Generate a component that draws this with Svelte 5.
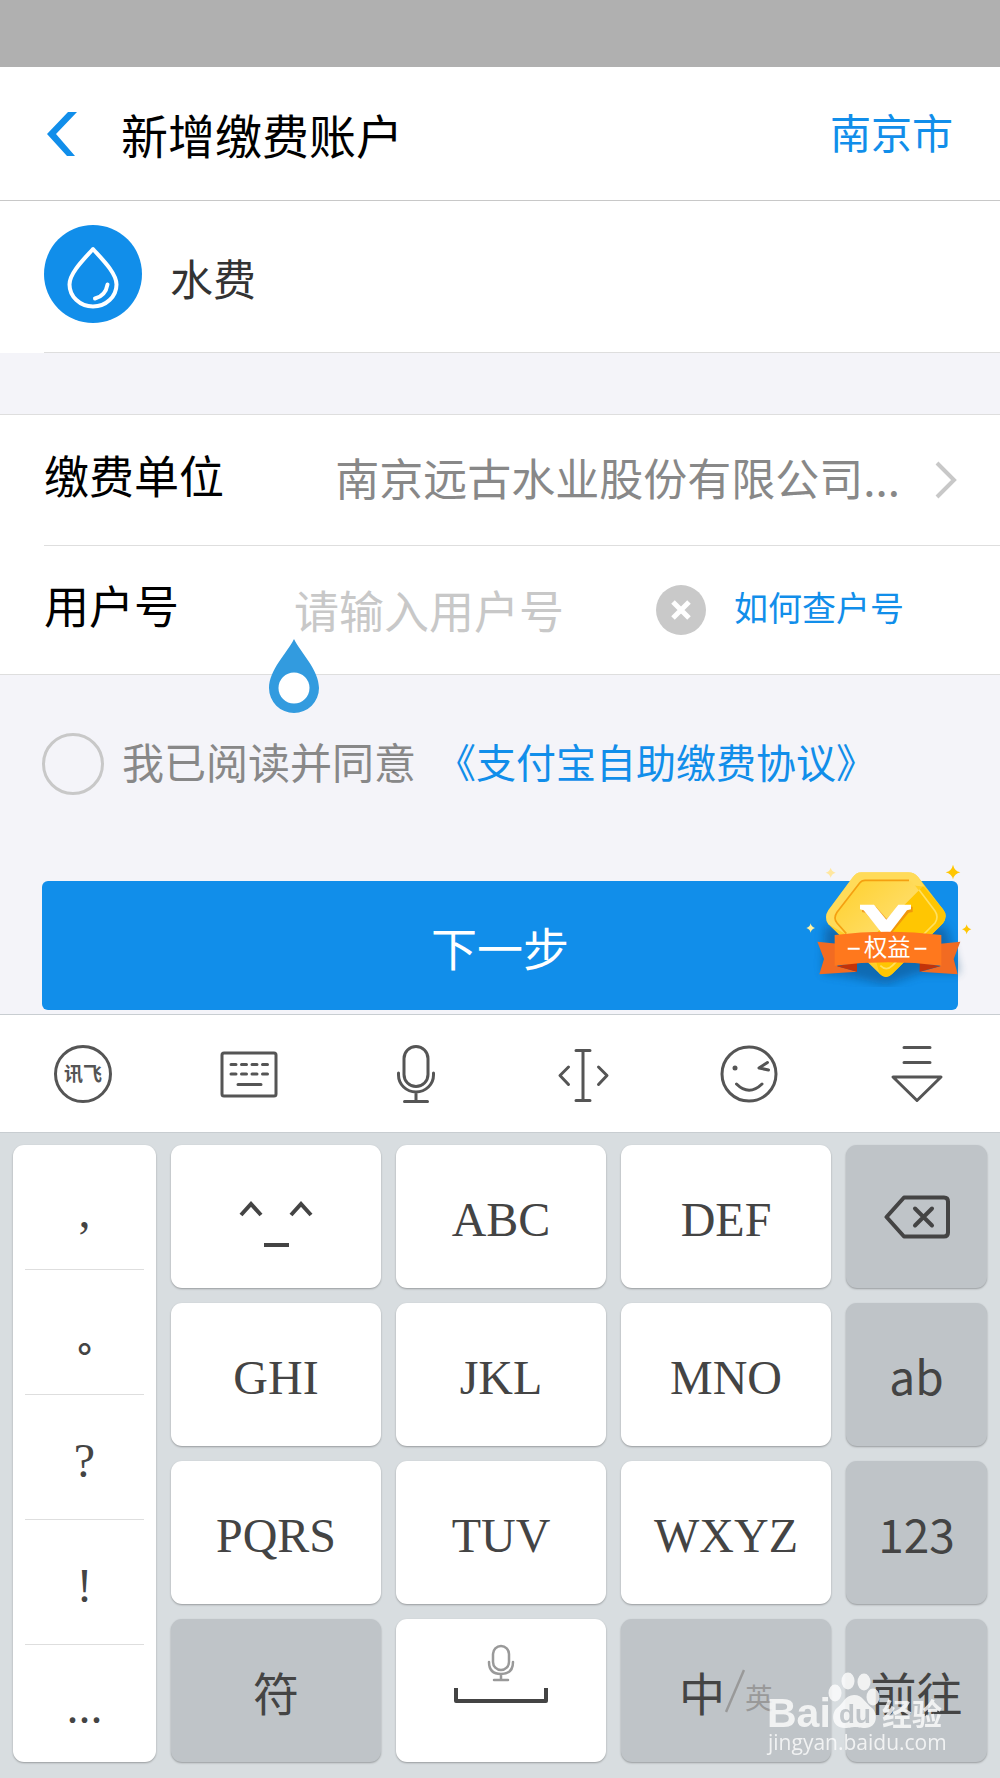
<script lang="ts">
    type Key = { label: string; kind?: string };

    const marks = [",", "。", "?", "!", "..."];

    const keys: Key[] = [
        { label: "^_^", kind: "face" },
        { label: "ABC" },
        { label: "DEF" },
        { label: "删除", kind: "delete" },
        { label: "GHI" },
        { label: "JKL" },
        { label: "MNO" },
        { label: "ab", kind: "side" },
        { label: "PQRS" },
        { label: "TUV" },
        { label: "WXYZ" },
        { label: "123", kind: "side" },
        { label: "符", kind: "symbol" },
        { label: "空格", kind: "space" },
        { label: "中", kind: "lang" },
        { label: "前往", kind: "go" },
    ];

    const grayKinds = ["delete", "side", "symbol", "lang", "go"];

    let account = $state("");
    let agreed = $state(false);
</script>

<div class="screen">
    <div class="statusBar"></div>

    <header>
        <button class="back" aria-label="返回">
            <svg width="32" height="46" viewBox="0 0 32 46">
                <path d="M22 1h9L10 23 29 45h-8L1 23z" fill="#118eea" />
            </svg>
        </button>
        <h1>新增缴费账户</h1>
        <a class="city" href="#city">南京市</a>
    </header>

    <main>
        <section class="service">
            <svg class="drop" width="98" height="98" viewBox="0 0 98 98">
                <circle cx="49" cy="49" r="49" fill="#118eea" />
                <g fill="none" stroke="#fff" stroke-width="4" stroke-linecap="round" stroke-linejoin="round">
                    <path d="M49 24C40 34 25.500 48 25.500 59.500a23.500 22 0 0 0 47 0C72.500 48 58 34 49 24z" />
                    <path d="M63.500 59.500q-2 11.500-12.500 14" />
                </g>
            </svg>
            <span>水费</span>
        </section>

        <section class="form">
            <div class="row">
                <span class="label" id="unitLabel">缴费单位</span>
                <button class="unit" aria-labelledby="unitLabel unitValue">
                    <span id="unitValue">南京远古水业股份有限公司...</span>
                    <svg width="24" height="40" viewBox="0 0 24 40">
                        <path d="M3 3l17 17L3 37" fill="none" stroke="#c8c8c8" stroke-width="4" />
                    </svg>
                </button>
            </div>
            <div class="row account">
                <label class="label" for="account">用户号</label>
                <div class="inputBox">
                    <input id="account" type="text" placeholder="请输入用户号" bind:value={account} />
                    <svg class="handle" width="52" height="76" viewBox="0 0 52 76">
                        <path
                            d="M26 1C33 15 51 32 51 50a25 25 0 0 1-50 0C1 32 19 15 26 1z"
                            fill="#329bdf"
                        />
                        <circle cx="26" cy="50" r="15.500" fill="#fff" />
                    </svg>
                </div>
                <button class="clear" aria-label="清除" onclick={() => (account = "")}>
                    <svg width="50" height="50" viewBox="0 0 50 50">
                        <circle cx="25" cy="25" r="25" fill="#c9c9c9" />
                        <path d="M17 17l16 16M33 17L17 33" stroke="#fff" stroke-width="5" />
                    </svg>
                </button>
                <a class="help" href="#help">如何查户号</a>
            </div>
        </section>

        <div class="agree">
            <input id="agree" type="checkbox" bind:checked={agreed} />
            <label for="agree">我已阅读并同意</label>
            <a href="#terms">《支付宝自助缴费协议》</a>
        </div>

        <div class="action">
            <button class="next">下一步</button>
            <svg class="badge" width="174" height="124" viewBox="70 70 522 372">
                <defs>
                    <linearGradient id="gold" x1="0" y1="0" x2="1" y2="1">
                        <stop offset="0" stop-color="#ffd02a" />
                        <stop offset="0.500" stop-color="#ffdc62" />
                    </linearGradient>
                    <filter id="shade" x="-30%" y="-30%" width="160%" height="180%">
                        <feGaussianBlur stdDeviation="14" />
                    </filter>
                </defs>
                <path
                    d="M135 260L500 260 540 400 420 400 320 435 200 410 130 400z"
                    fill="#0b3f70"
                    opacity="0.450"
                    filter="url(#shade)"
                />
                <path
                    d="M245 98h140q18 0 30 13l75 98q16 20 0 42L338 402q-19 20-38 0L146 254q-14-20 0-42l72-98q12-16 27-16z"
                    fill="#ffcf28"
                />
                <path d="M245 98h140q18 0 30 13l20 30L262 122 170 232l60 70L146 254q-14-20 0-42l72-98q12-16 27-16z" fill="#ffe27a" opacity="0.600" />
                <path d="M256 120h124q12 0 20 10l66 84q12 18 0 36L326 386h-16L172 250q-12-18 0-32l68-88q6-10 16-10z" fill="url(#gold)" />
                <path d="M430 140l60 69q16 20 0 42L338 402q-19 20-38 0L270 300z" fill="#ffc602" />
                <path
                    d="M388 122l-132 0q-10 0-16 8l-68 88q-12 18 0 32l28 32"
                    fill="none"
                    stroke="#f5a010"
                    stroke-width="5"
                />
                <path
                    d="M418 150l48 64q12 18 0 36L338 378q-18 18-36 0"
                    fill="none"
                    stroke="#ffe060"
                    stroke-width="5"
                />
                <path d="M247 201h42l32 36 36-36h42v16l-12 2-56 68h-16l-58-68-10-2z" fill="#e87a10" opacity="0.600" />
                <path d="M241 195h42l37 45 36-45h38v14l-12 3-54 70h-20l-56-70-11-3z" fill="#fff" />
                <path d="M113 306l60 6v68l60 16-114 8 14-46zM542 306l-60 6v68l-60 16 112 8-12-46z" fill="#f26b22" />
                <path d="M172 380l60-12v28zM480 380l-60-12v28z" fill="#c2330a" />
                <path d="M165 286q155-20 320 0v92q-160-20-320 0z" fill="#ff781d" />
                <path d="M204 327h36M404 327h36" stroke="#fff" stroke-width="6" />
                <text x="323" y="348" text-anchor="middle" font-size="70" fill="#fff">权益</text>
                <path d="M520 75q4 19 22 23-18 4-22 21-4-17-22-21 18-4 22-23z" fill="#ffc602" />
                <path d="M561 254q2 12 14 15-12 3-14 15-2-12-14-15 12-3 14-15z" fill="#ffc602" />
                <path d="M153 84q3 12 15 15-12 3-15 15-3-12-15-15 12-3 15-15z" fill="#ffe7a0" />
                <path d="M93 251q2 11 13 14-11 3-13 14-2-11-13-14 11-3 13-14z" fill="#fff0a0" />
            </svg>
        </div>
    </main>

    <nav class="toolbar">
        <button aria-label="输入法">
            <svg viewBox="0 0 60 60">
                <circle cx="30" cy="30" r="27.500" />
                <text x="30" y="37" text-anchor="middle">讯飞</text>
            </svg>
        </button>
        <button aria-label="键盘">
            <svg viewBox="0 0 60 60">
                <rect x="2" y="9" width="54" height="43" rx="2" />
                <path d="M11 20.500h5M21.500 20.500h5M32 20.500h5M42.500 20.500h5M11 30h5M21.500 30h5M32 30h5M42.500 30h5M18 40.500h23" />
            </svg>
        </button>
        <button aria-label="语音">
            <svg viewBox="0 0 60 60">
                <rect x="17" y="2.500" width="24" height="40" rx="12" />
                <path d="M11.500 29v2a17.500 17 0 0 0 35 0v-2M29 48v9M17.500 57.500h23" />
            </svg>
        </button>
        <button aria-label="光标">
            <svg viewBox="0 0 60 60">
                <path d="M30 6.500v50M23 6.500h14M23 56.500h14M15.500 23L7 31.500l8.500 9M45.500 23l8.500 8.500-8.500 9" />
            </svg>
        </button>
        <button aria-label="表情">
            <svg viewBox="0 0 60 60">
                <circle cx="29" cy="30" r="27" />
                <circle class="eye" cx="15" cy="24" r="2.500" />
                <path d="M47.500 18.500L39 24l9.500 2M16.500 40q12.500 12.500 25.500 0" />
            </svg>
        </button>
        <button aria-label="收起">
            <svg viewBox="0 0 60 60">
                <path d="M17 3.500h26M17 18.500h26M6 33h48L30 56.500z" />
            </svg>
        </button>
    </nav>

    <div class="keyboard">
        <div class="marks">
            {#each marks as mark (mark)}
                <button class:stop={mark === "。"}>{mark}</button>
            {/each}
        </div>

        {#each keys as key (key.label)}
            <button class="key {key.kind ?? ''}" class:gray={grayKinds.includes(key.kind ?? "")} aria-label={key.label}>
                {#if key.kind === "face"}
                    <svg width="74" height="50" viewBox="0 0 74 50">
                        <path d="M2 16L12 5l10 11M52 16L62 5l10 11M25 46h25" fill="none" stroke="#444" stroke-width="4" />
                    </svg>
                {:else if key.kind === "delete"}
                    <svg width="66" height="44" viewBox="0 0 66 44">
                        <g fill="none" stroke="#444" stroke-width="4" stroke-linejoin="round" stroke-linecap="round">
                            <path d="M20 2.500h40q4 0 4 4v31q0 4-4 4H20L2.500 22z" />
                            <path d="M31 13.500l17 17M48 13.500l-17 17" />
                        </g>
                    </svg>
                {:else if key.kind === "space"}
                    <svg width="94" height="60" viewBox="0 0 94 60">
                        <g fill="none" stroke="#999" stroke-width="2.500" stroke-linecap="round">
                            <rect x="39" y="2" width="16" height="24" rx="8" />
                            <path d="M35 18q0 12 12 12t12-12M47 30v6M40 36h14" />
                        </g>
                        <path d="M2 44v13h90V44" fill="none" stroke="#444" stroke-width="4" stroke-linejoin="round" />
                    </svg>
                {:else if key.kind === "lang"}
                    <span>中</span>
                    <svg width="20" height="44" viewBox="0 0 20 44">
                        <path d="M1 43L19 1" stroke="#999" stroke-width="2.500" />
                    </svg>
                    <small>英</small>
                {:else}
                    {key.label}
                {/if}
            </button>
        {/each}
    </div>

    <svg class="watermark" width="190" height="90" viewBox="0 0 190 90" fill="#fff" opacity="0.780">
        <text class="brand" x="4" y="53">Bai</text>
        <ellipse cx="72" cy="19" rx="6.500" ry="8.500" />
        <ellipse cx="85" cy="7" rx="6.500" ry="8.500" />
        <ellipse cx="101" cy="8" rx="6.500" ry="8.500" />
        <ellipse cx="110" cy="23" rx="6.500" ry="8.500" />
        <path d="M91 21c-9 0-11 9-17 13-6 5-6 20 8 20 5 0 7-1 10-1s5 1 10 1c13 0 13-15 7-20-7-5-9-13-18-13z" />
        <text class="du" x="92" y="49" text-anchor="middle">du</text>
        <text class="exp" x="119" y="51">经验</text>
        <text class="url" x="5" y="76">jingyan.baidu.com</text>
    </svg>
</div>

<style>
    :global(body) {
        margin: 0;
        background-color: #f4f4f9;
    }

    .screen {
        position: relative;
        font-family: KaiTi, "Noto Sans CJK SC", sans-serif;
        font-weight: 400;
        color: #000;
        background-color: #f4f4f9;
    }

    button {
        padding: 0;
        border: none;
        background: none;
        font: inherit;
        color: inherit;
        display: flex;
        align-items: center;
        justify-content: center;
    }

    a {
        color: #118eea;
        text-decoration: none;
    }

    .statusBar {
        height: 67px;
        background-color: #b0b0b0;
    }

    header {
        display: flex;
        align-items: center;
        height: 133px;
        padding: 0 47px 0 46px;
        background-color: #fff;
        border-bottom: 1px solid #c8c8c8;
    }

    h1 {
        flex: 1;
        margin: 0 0 0 43px;
        font-size: 47px;
        line-height: 60px;
        font-weight: 400;
    }

    .city {
        padding-bottom: 6px;
        font-size: 41px;
        line-height: 60px;
    }

    .service {
        position: relative;
        display: flex;
        align-items: center;
        gap: 28px;
        height: 152px;
        padding-left: 44px;
        background-color: #fff;
        font-size: 43px;
        color: #333;
    }

    .drop {
        margin-bottom: 6px;
    }

    .service::after,
    .account::before {
        content: "";
        position: absolute;
        left: 44px;
        right: 0;
        height: 1px;
        background-color: #dedede;
    }

    .service::after {
        bottom: 0;
    }

    .account::before {
        top: 0;
    }

    .form {
        margin-top: 61px;
        border-top: 1px solid #dedede;
        border-bottom: 1px solid #dedede;
        background-color: #fff;
    }

    .row {
        position: relative;
        display: flex;
        align-items: center;
        height: 130px;
        padding: 0 42px 0 44px;
    }

    .account {
        height: 129px;
    }

    .label {
        padding-bottom: 10px;
        font-size: 45px;
        line-height: 60px;
    }

    .unit {
        flex: 1;
        justify-content: flex-end;
        gap: 34px;
        font-size: 44px;
        line-height: 60px;
        color: #888;
    }

    .unit span {
        padding-bottom: 6px;
    }

    .inputBox {
        position: relative;
        flex: 1;
        margin-left: 115px;
    }

    #account {
        width: 100%;
        padding: 0;
        border: none;
        outline: none;
        background: none;
        font: inherit;
        font-size: 45px;
        line-height: 60px;
    }

    #account::placeholder {
        color: #c8c8c8;
        opacity: 1;
    }

    .handle {
        position: absolute;
        left: -26px;
        top: 58px;
        z-index: 1;
    }

    .clear {
        margin-right: 28px;
    }

    .help {
        margin-right: 54px;
        padding-bottom: 6px;
        font-size: 34px;
    }

    .agree {
        display: flex;
        align-items: center;
        padding: 58px 42px 0;
        color: #888;
    }

    .agree input {
        appearance: none;
        width: 62px;
        height: 62px;
        margin: 0 18px 0 0;
        border: 3px solid #c8c8c8;
        border-radius: 50%;
    }

    .agree input:checked {
        background-color: #118eea;
    }

    .agree label,
    .agree a {
        padding-bottom: 6px;
        line-height: 56px;
    }

    .agree label {
        font-size: 42px;
    }

    .agree a {
        margin-left: 20px;
        font-size: 40px;
    }

    .action {
        position: relative;
        padding: 86px 42px 4px;
    }

    .next {
        width: 100%;
        height: 129px;
        border-radius: 6px;
        background-color: #118eea;
        color: #fff;
        font-size: 46px;
    }

    .badge {
        position: absolute;
        top: 68px;
        right: 23px;
    }

    .badge text {
        font-family: "Noto Sans CJK SC", sans-serif;
    }

    .toolbar {
        display: grid;
        grid-template-columns: repeat(6, 1fr);
        height: 117px;
        border-top: 1px solid #c8cdd1;
        border-bottom: 1px solid #c8cdd1;
        background-color: #fff;
    }

    .toolbar svg {
        width: 60px;
        height: 60px;
        fill: none;
        stroke: #555;
        stroke-width: 3;
        stroke-linecap: round;
        stroke-linejoin: round;
    }

    .toolbar text {
        font-size: 19px;
        font-weight: 700;
        fill: #555;
        stroke: none;
    }

    .toolbar .eye {
        fill: #555;
        stroke: none;
    }

    .keyboard {
        display: grid;
        grid-template-columns: 143fr 210fr 210fr 210fr 141fr;
        grid-auto-rows: 143px;
        gap: 15px;
        padding: 12px 13px 16px;
        background-color: #d8dde0;
        color: #444;
    }

    .marks,
    .key {
        border-radius: 11px;
        background-color: #fff;
        box-shadow: 0 1px 2px rgba(0, 0, 0, 0.3);
    }

    .marks {
        grid-row: span 4;
        display: flex;
        flex-direction: column;
        padding: 0 12px;
    }

    .marks button {
        height: 125px;
        padding-top: 6px;
        border-bottom: 1px solid #dedede;
        font-family: "Liberation Serif", serif;
        font-size: 48px;
    }

    .marks button:last-child {
        flex: 1;
        border-bottom: none;
    }

    .marks .stop {
        padding-top: 30px;
        font-family: "Noto Sans CJK TC", sans-serif;
        font-size: 36px;
        font-weight: 700;
    }

    .key {
        padding-top: 6px;
        font-family: "Liberation Serif", serif;
        font-size: 48px;
    }

    .face {
        padding-top: 14px;
    }

    .space {
        padding: 0 0 34px;
    }

    .gray {
        padding-top: 0;
        background-color: #bfc4c8;
        font-family: "Noto Sans CJK SC", sans-serif;
        font-size: 46px;
    }

    .lang small {
        padding-top: 12px;
        font-size: 28px;
        color: #999;
    }

    .watermark {
        position: absolute;
        right: 47px;
        bottom: 14px;
        overflow: visible;
        font-family: "Liberation Sans", "Noto Sans CJK SC", sans-serif;
        pointer-events: none;
    }

    .brand {
        font-size: 41px;
        font-weight: 700;
    }

    .du {
        font-size: 26px;
        font-weight: 700;
        fill: #bfc4c8;
    }

    .exp {
        font-size: 30px;
        font-weight: 700;
    }

    .url {
        font-family: "Open Sans", sans-serif;
        font-size: 21px;
    }
</style>
